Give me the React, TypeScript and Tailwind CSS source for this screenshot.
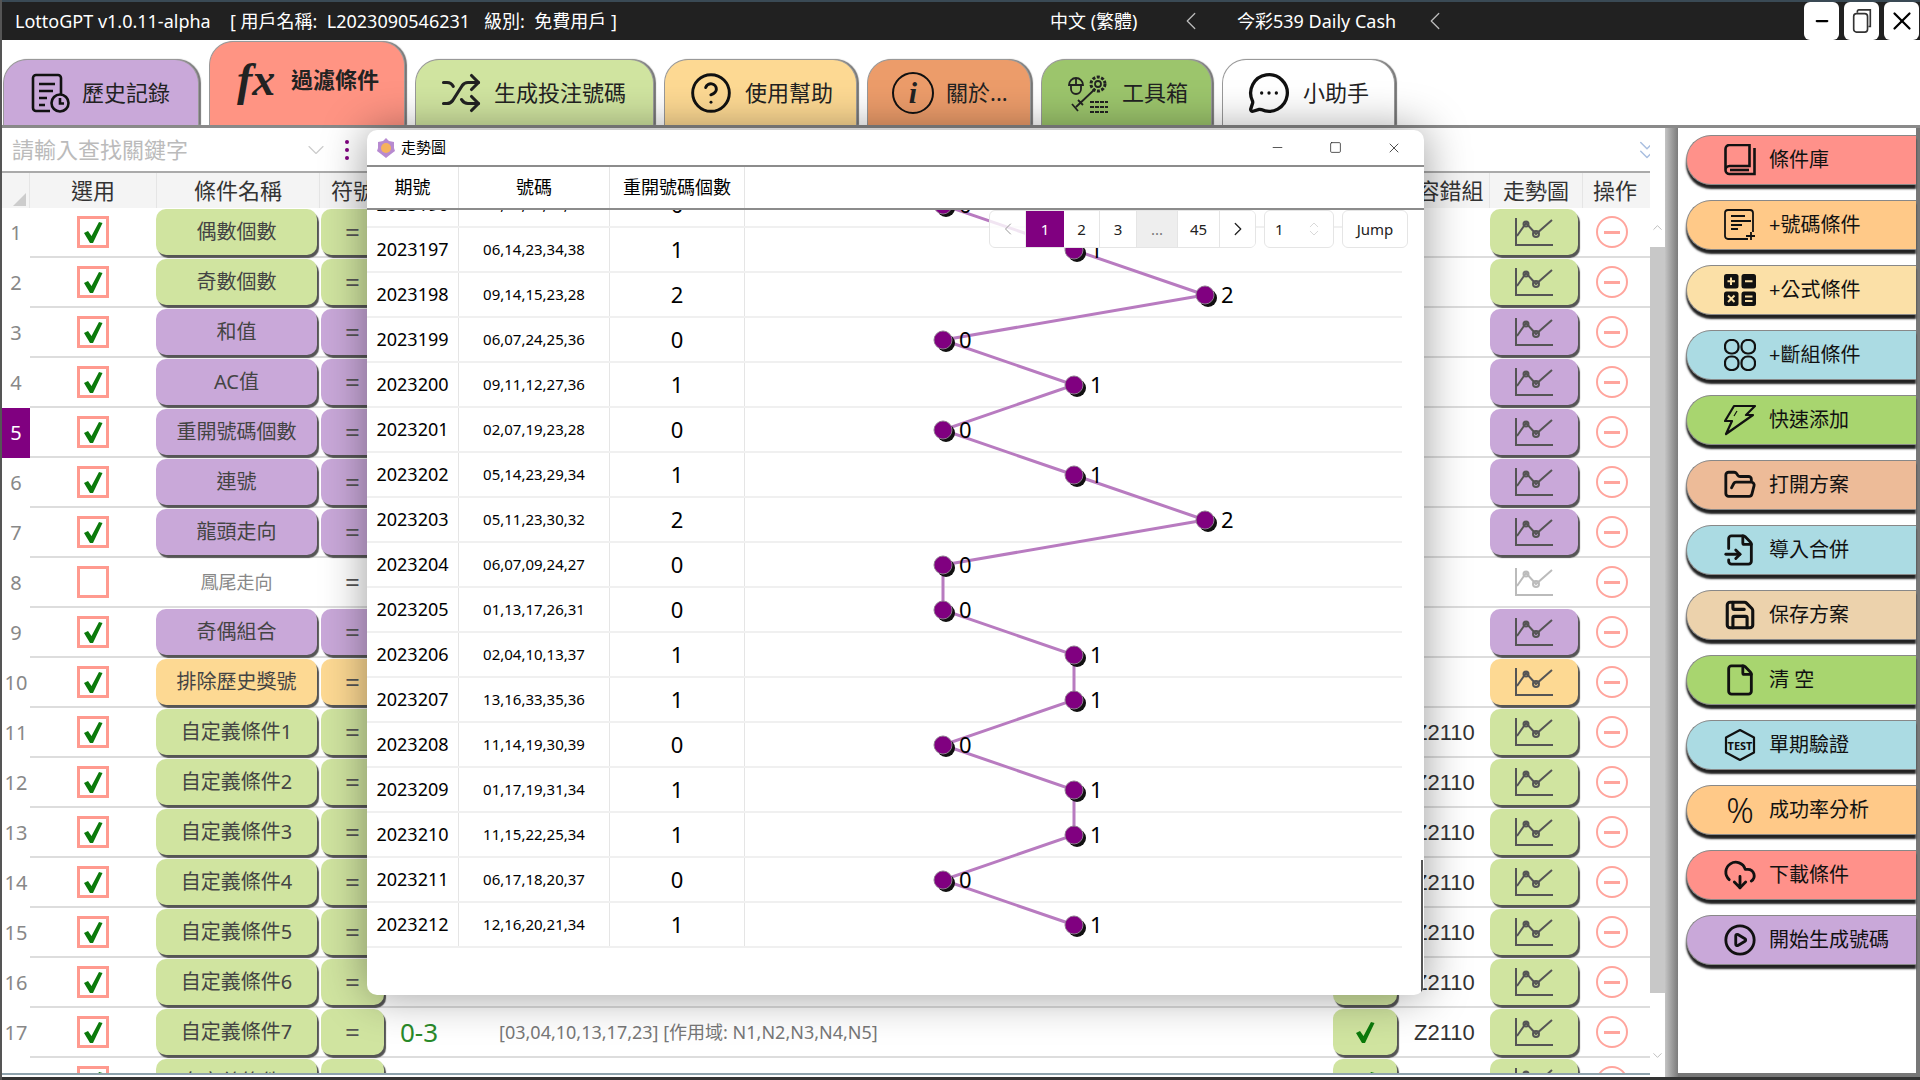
import {
  Check,
  ChevronDown,
  ChevronLeft,
  ChevronRight,
  ChevronsDown,
  ChevronsUpDown,
  ChevronUp,
  CirclePlay,
  CircleHelp,
  CloudDownload,
  File,
  FileInput,
  FolderOpen,
  MessageCircleMore,
  Minus,
  Save,
  Shuffle,
  Square,
  X,
} from "lucide-react";
import type { ReactNode } from "react";

const FONT = "font-['Noto_Sans','Noto_Sans_CJK_TC',sans-serif]";

const HistoryIcon = () => (
  <svg viewBox="0 0 40 40" className="h-10 w-10" fill="none" stroke="#111" strokeWidth="2.6">
    <path d="M20 38H6a3 3 0 0 1-3-3V5a3 3 0 0 1 3-3h22a3 3 0 0 1 3 3v16" />
    <path d="M9 11h16M9 18h14M9 25h8M9 32h6" />
    <circle cx="30" cy="30" r="8.5" />
    <path d="M30 25v5.5h4" />
  </svg>
);

const ToolsIcon = () => (
  <svg viewBox="0 0 44 44" className="h-11 w-11" fill="none" stroke="#222" strokeWidth="1.8">
    <path d="M3 14a7 7 0 0 1 14 0zM5 14v4a5 5 0 0 0 10 0v-4M10 7v6" />
    <circle cx="32" cy="13" r="7" strokeDasharray="3 1.5" strokeWidth="3" />
    <circle cx="32" cy="13" r="3" />
    <path d="M29 18 10 36M6 33l6 7M12 29l5 5" />
    <path d="M24 31h18M24 36h18M24 41h18" strokeWidth="2.2" strokeDasharray="4 1" />
  </svg>
);

const BookIcon = () => (
  <svg viewBox="0 0 32 32" className="h-8 w-8" fill="none" stroke="#111" strokeWidth="2.6">
    <path d="M1.5 26V5a4 4 0 0 1 4-4h20v21H5.500a4 4 0 0 0 0 8H30.500V4" />
    <path d="M6 26h19" />
  </svg>
);

const NoteAddIcon = () => (
  <svg viewBox="0 0 32 32" className="h-8 w-8" fill="none" stroke="#111" strokeWidth="1.8">
    <path d="M24 30H4a3 3 0 0 1-3-3V4a3 3 0 0 1 3-3h22a3 3 0 0 1 3 3v19" />
    <path d="M7 7h14M7 12h20M7 16h11M7 20h7M27 23v8M22 27h9" />
  </svg>
);

const CalcIcon = () => (
  <svg viewBox="0 0 32 32" className="h-8 w-8">
    <rect x="0" y="0" width="14.500" height="14.500" rx="2.500" fill="#111" />
    <rect x="17.500" y="0" width="14.500" height="14.500" rx="2.500" fill="#111" />
    <rect x="0" y="17.500" width="14.500" height="14.500" rx="2.500" fill="#111" />
    <rect x="17.500" y="17.500" width="14.500" height="14.500" rx="2.500" fill="#111" />
    <path
      d="M7 3.500v7.500M3.500 7.250h7.500M21 7.250h7.500M4 21.500l6.500 6.500M10.500 21.500 4 28M21 22.500h7.500M21 27h7.500"
      stroke="#fbe0a7"
      strokeWidth="2"
      fill="none"
    />
  </svg>
);

const GridIcon = () => (
  <svg viewBox="0 0 32 32" className="h-8 w-8" fill="none" stroke="#111" strokeWidth="2.2">
    <rect x="1" y="1" width="13.500" height="13.500" rx="6" />
    <rect x="17.500" y="1" width="13.500" height="13.500" rx="6" />
    <rect x="1" y="17.500" width="13.500" height="13.500" rx="6" />
    <rect x="17.500" y="17.500" width="13.500" height="13.500" rx="6" />
  </svg>
);

const BoltIcon = () => (
  <svg viewBox="0 0 32 32" className="h-8 w-8" fill="none" stroke="#111" strokeWidth="2.200" strokeLinejoin="round">
    <path d="M10 2h21l-9 9h7L2 30l6-13H1z" />
    <path d="M10 12l3-5" strokeWidth="1.200" />
  </svg>
);

const TestIcon = () => (
  <svg viewBox="0 0 32 32" className="h-8 w-8" fill="none" stroke="#111" strokeWidth="2.200">
    <path d="M16 1 30 8.500v15L16 31 2 23.500v-15z" strokeLinejoin="round" />
    <text x="16" y="20.500" textAnchor="middle" fontSize="11" fontWeight="700" stroke="none" fill="#111">
      TEST
    </text>
  </svg>
);

const TrendIcon = ({ color = "#555" }: { color?: string }) => (
  <svg viewBox="0 0 38 30" className="h-[30px] w-[38px]" fill="none" stroke={color} strokeWidth="2">
    <path d="M1 1v27h37" />
    <path d="M2 19 11 6l10 11L37 3" />
    <circle cx="11" cy="7" r="2.500" />
    <circle cx="21" cy="17" r="3" />
  </svg>
);

const GreenCheck = () => (
  <svg viewBox="0 0 22 24" className="h-6 w-[22px]">
    <path d="M2 13l4-2 3.500 5L17 2l3.500 1L11 23H8z" fill="#0b7a0b" />
  </svg>
);

const tabs = [
  { label: "歷史記錄", w: "w-[196px]", bg: "bg-[#c9a8d9]", pl: "pl-[26px]", icon: <HistoryIcon /> },
  {
    label: "過濾條件",
    w: "w-[196px]",
    bg: "bg-[#ff9483]",
    pl: "pl-[27px]",
    active: true,
    icon: <span className="w-[42px] font-['Liberation_Serif',serif] text-[46px] leading-none italic">fx</span>,
  },
  { label: "生成投注號碼", w: "w-[239px]", bg: "bg-[#d0e4a0]", pl: "pl-[24px]", icon: <Shuffle size={42} strokeWidth={1.8} color="#222" /> },
  { label: "使用幫助", w: "w-[193px]", bg: "bg-[#fdd993]", pl: "pl-[24px]", icon: <CircleHelp size={44} strokeWidth={1.6} color="#111" /> },
  {
    label: "關於...",
    w: "w-[164px]",
    bg: "bg-[#ec9c6a]",
    pl: "pl-[24px]",
    icon: (
      <span className="flex h-[42px] w-[42px] items-center justify-center rounded-full border-[2.500px] border-[#111] font-['Liberation_Serif',serif] text-[30px] font-bold italic">
        i
      </span>
    ),
  },
  { label: "工具箱", w: "w-[171px]", bg: "bg-[#9cc56c]", pl: "pl-[24px]", icon: <ToolsIcon /> },
  { label: "小助手", w: "w-[173px]", bg: "bg-white", pl: "pl-[24px]", icon: <MessageCircleMore size={44} strokeWidth={1.8} color="#111" /> },
];

const sideButtons: { label: string; bg: string; icon: ReactNode }[] = [
  { label: "條件庫", bg: "bg-[#ff918a]", icon: <BookIcon /> },
  { label: "+號碼條件", bg: "bg-[#ffc988]", icon: <NoteAddIcon /> },
  { label: "+公式條件", bg: "bg-[#fbe0a7]", icon: <CalcIcon /> },
  { label: "+斷組條件", bg: "bg-[#abdbe3]", icon: <GridIcon /> },
  { label: "快速添加", bg: "bg-[#a8d56f]", icon: <BoltIcon /> },
  { label: "打開方案", bg: "bg-[#edbb98]", icon: <FolderOpen size={36} strokeWidth={2} color="#111" /> },
  { label: "導入合併", bg: "bg-[#abdbe3]", icon: <FileInput size={36} strokeWidth={2} color="#111" /> },
  { label: "保存方案", bg: "bg-[#ecd2ac]", icon: <Save size={36} strokeWidth={2.200} color="#111" /> },
  { label: "清 空", bg: "bg-[#a8d56f]", icon: <File size={36} strokeWidth={2} color="#111" /> },
  { label: "單期驗證", bg: "bg-[#abdbe3]", icon: <TestIcon /> },
  { label: "成功率分析", bg: "bg-[#ffc988]", icon: <span className="w-8 text-center text-[34px] leading-none font-light">%</span> },
  { label: "下載條件", bg: "bg-[#ff918a]", icon: <CloudDownload size={36} strokeWidth={2} color="#111" /> },
  { label: "開始生成號碼", bg: "bg-[#c9a8d9]", icon: <CirclePlay size={36} strokeWidth={2} color="#111" /> },
];

const GREEN = "bg-[#d0e4a0]";
const PURPLE = "bg-[#c9a8d9]";
const ORANGE = "bg-[#fdd993]";

const conditions = [
  { name: "偶數個數", color: GREEN },
  { name: "奇數個數", color: GREEN },
  { name: "和值", color: PURPLE },
  { name: "AC值", color: PURPLE },
  { name: "重開號碼個數", color: PURPLE },
  { name: "連號", color: PURPLE },
  { name: "龍頭走向", color: PURPLE },
  { name: "鳳尾走向", color: "", off: true },
  { name: "奇偶組合", color: PURPLE },
  { name: "排除歷史獎號", color: ORANGE },
  { name: "自定義條件1", color: GREEN, custom: true },
  { name: "自定義條件2", color: GREEN, custom: true },
  { name: "自定義條件3", color: GREEN, custom: true },
  { name: "自定義條件4", color: GREEN, custom: true },
  { name: "自定義條件5", color: GREEN, custom: true },
  { name: "自定義條件6", color: GREEN, custom: true },
  { name: "自定義條件7", color: GREEN, custom: true },
  { name: "自定義條件8", color: GREEN, custom: true },
];

const draws: [string, string, number][] = [
  ["2023196", "04,10,13,27,34", 0],
  ["2023197", "06,14,23,34,38", 1],
  ["2023198", "09,14,15,23,28", 2],
  ["2023199", "06,07,24,25,36", 0],
  ["2023200", "09,11,12,27,36", 1],
  ["2023201", "02,07,19,23,28", 0],
  ["2023202", "05,14,23,29,34", 1],
  ["2023203", "05,11,23,30,32", 2],
  ["2023204", "06,07,09,24,27", 0],
  ["2023205", "01,13,17,26,31", 0],
  ["2023206", "02,04,10,13,37", 1],
  ["2023207", "13,16,33,35,36", 1],
  ["2023208", "11,14,19,30,39", 0],
  ["2023209", "01,17,19,31,34", 1],
  ["2023210", "11,15,22,25,34", 1],
  ["2023211", "06,17,18,20,37", 0],
  ["2023212", "12,16,20,21,34", 1],
];

const pointX = (v: number) => 198 + v * 131;
const pointY = (i: number) => 22 + i * 45;

const ConditionRow = ({ index, row }: { index: number; row: (typeof conditions)[number] }) => {
  const btn = "rounded-[10px] shadow-[2px_3px_1px_#555]";
  return (
    <div className="flex h-[50px] shrink-0">
      <div
        className={`flex w-[28px] items-center justify-center text-[20px] ${
          index === 5 ? "bg-[#800080] text-white" : "text-[#888]"
        }`}
      >
        {index}
      </div>
      <div className="flex flex-1 items-center border-b-2 border-[#ddd]">
        <div className="flex w-[126px] items-center justify-center">
          <div className="flex h-8 w-8 items-center justify-center border-[3px] border-[#ff9a8f] bg-white">
            {!row.off && <GreenCheck />}
          </div>
        </div>
        <div
          className={`flex h-[46px] w-[161px] items-center justify-center ${
            row.off ? "text-[18px] text-[#888]" : `${btn} ${row.color} text-[20px] text-[#444]`
          }`}
        >
          {row.name}
        </div>
        <div
          className={`ml-[4px] flex h-[46px] w-[63px] items-center justify-center text-[26px] text-[#555] ${
            row.off ? "" : `${btn} ${row.color}`
          }`}
        >
          =
        </div>
        <div className="ml-[16px] w-[99px] text-[26px] text-[#2a8a2a]">{row.custom ? "0-3" : ""}</div>
        <div className="w-[834px] text-[18px] whitespace-nowrap text-[#777]">
          {row.custom ? "[03,04,10,13,17,23] [作用域:  N1,N2,N3,N4,N5]" : ""}
        </div>
        <div className={`flex h-[46px] w-[64px] items-center justify-center ${row.custom ? `${btn} ${row.color}` : ""}`}>
          {row.custom && <GreenCheck />}
        </div>
        <div className="ml-[17px] w-[76px] font-['Liberation_Sans',sans-serif] text-[22px] text-[#333]">
          {row.custom ? "Z2110" : ""}
        </div>
        <div
          className={`flex h-[46px] w-[88px] items-center justify-center ${row.off ? "" : `${btn} ${row.color}`}`}
        >
          <TrendIcon color={row.off ? "#bbb" : "#555"} />
        </div>
        <div className="ml-[18px] flex h-8 w-8 items-center justify-center rounded-full border-2 border-[#ffa59d]">
          <div className="h-[3px] w-[16px] bg-[#ffa59d]" />
        </div>
      </div>
    </div>
  );
};

const TrendWindow = () => (
  <div className="absolute top-[130px] left-[365px] flex h-[865px] w-[1057px] flex-col overflow-hidden rounded-[10px] bg-white shadow-[0_0_45px_rgba(0,0,0,0.4)]">
    <div className="flex h-[37px] shrink-0 items-center border-b-2 border-[#8c8c8c]">
      <svg viewBox="0 0 18 20" className="ml-[10px] h-5 w-[18px]">
        <path d="M9 0l3 3 5 1v6l1 3-4 3-5 4-5-4-4-3 1-3V4l5-1z" fill="#b78ad0" />
        <circle cx="9" cy="10" r="5" fill="#f5b25c" />
      </svg>
      <span className="ml-[6px] text-[15px] text-black">走勢圖</span>
      <div className="ml-auto flex items-center">
        <Minus size={15} strokeWidth={1.200} color="#222" className="mr-[44px]" />
        <Square size={13} strokeWidth={1.400} color="#222" className="mr-[44px]" />
        <X size={16} strokeWidth={1.200} color="#222" className="mr-[22px]" />
      </div>
    </div>
    <div className="flex h-[43px] shrink-0 border-b-2 border-[#8c8c8c] text-[18px] text-black">
      <div className="flex w-[92px] items-center justify-center border-r border-[#e5e5e5]">期號</div>
      <div className="flex w-[151px] items-center justify-center border-r border-[#e5e5e5]">號碼</div>
      <div className="flex w-[135px] items-center justify-center border-r border-[#e5e5e5]">重開號碼個數</div>
    </div>
    <div className="relative flex-1 overflow-hidden">
      <div className="relative -mt-[27px]">
        {draws.map(([period, nums, repeat]) => (
          <div key={period} className="flex h-[45px] w-[1035px] border-b-2 border-[#f0f0f0] text-black">
            <div className="flex w-[92px] items-center justify-center border-r border-[#e5e5e5] text-[18px]">{period}</div>
            <div className="flex w-[151px] items-center justify-center border-r border-[#e5e5e5] text-[15px]">{nums}</div>
            <div className="flex w-[135px] items-center justify-center border-r border-[#e5e5e5] text-[22px]">{repeat}</div>
          </div>
        ))}
        <svg className="absolute top-0 left-[378px] h-[765px] w-[679px]" viewBox="0 0 679 765">
          <polyline
            points={draws.map(([, , v], i) => `${pointX(v)},${pointY(i)}`).join(" ")}
            fill="none"
            stroke="#b87bc0"
            strokeWidth="3"
          />
          {draws.map(([period, , v], i) => (
            <g key={period}>
              <circle cx={pointX(v) + 3} cy={pointY(i) + 3} r="9" fill="#111" />
              <circle cx={pointX(v)} cy={pointY(i)} r="9" fill="#800080" stroke="#8f7a90" />
              <text x={pointX(v) + 16} y={pointY(i) + 8} fontSize="22" fill="#000">
                {v}
              </text>
            </g>
          ))}
        </svg>
      </div>
      <div className="absolute top-0 left-[622px] flex h-[38px] items-stretch text-[15px] text-[#222]">
        <div className="flex w-[267px] overflow-hidden rounded-md border border-[#e5e5e5] bg-white/80">
          <div className="flex w-[36px] items-center justify-center border-r border-[#eee]">
            <ChevronLeft size={20} strokeWidth={1.200} color="#999" />
          </div>
          <div className="flex w-[38px] items-center justify-center bg-[#800080] text-white">1</div>
          <div className="flex w-[36px] items-center justify-center border-r border-[#e5e5e5] bg-white">2</div>
          <div className="flex w-[37px] items-center justify-center border-r border-[#e5e5e5] bg-white">3</div>
          <div className="flex w-[40px] items-center justify-center bg-[#eeeeee] text-[#777]">...</div>
          <div className="flex w-[43px] items-center justify-center border-x border-[#e5e5e5] bg-white">45</div>
          <div className="flex flex-1 items-center justify-center bg-white">
            <ChevronRight size={22} strokeWidth={1.400} color="#222" />
          </div>
        </div>
        <div className="ml-[8px] flex w-[70px] items-center justify-between rounded-md border border-[#e5e5e5] bg-white pr-[10px] pl-[10px]">
          1
          <ChevronsUpDown size={18} strokeWidth={1} color="#ccc" />
        </div>
        <div className="ml-[8px] flex w-[66px] items-center justify-center rounded-md border border-[#e5e5e5] bg-white">
          Jump
        </div>
      </div>
    </div>
    <div className="absolute right-[1px] bottom-0 h-[135px] w-[2px] bg-[#555]" />
  </div>
);

export default function App() {
  return (
    <div className={`relative flex h-[1080px] w-[1920px] flex-col overflow-hidden border-l-2 border-[#555] bg-white ${FONT}`}>
      <header className="relative flex h-[40px] shrink-0 items-center border-t-2 border-[#3a4a55] bg-[#212121] text-[18px] whitespace-pre text-white">
        <span className="ml-[13px] w-[215px]">LottoGPT v1.0.11-alpha</span>
        <span className="w-[820px]">[ 用戶名稱:  L2023090546231   級別:  免費用戶 ]</span>
        <span className="w-[128px]">中文 (繁體)</span>
        <ChevronLeft size={30} strokeWidth={1} color="#bbb" className="-ml-[2px]" />
        <span className="ml-[31px] w-[183px]">今彩539 Daily Cash</span>
        <ChevronLeft size={30} strokeWidth={1} color="#bbb" />
        <div className="absolute top-0 right-[1px] flex h-[38px] gap-[5px] text-black">
          <div className="flex w-[35px] items-center justify-center rounded-md bg-white">
            <Minus size={18} strokeWidth={3} />
          </div>
          <div className="flex w-[35px] items-center justify-center rounded-md bg-white">
            <svg viewBox="0 0 20 26" className="h-6 w-5" fill="none" stroke="#333" strokeWidth="1.800">
              <rect x="1" y="5" width="15" height="20" rx="3" />
              <path d="M5 4V2.500A1.500 1.500 0 0 1 6.500 1H19v18h-2" />
            </svg>
          </div>
          <div className="flex w-[35px] items-center justify-center rounded-md bg-white">
            <X size={30} strokeWidth={1.800} />
          </div>
        </div>
      </header>

      <nav className="flex h-[88px] shrink-0 items-end gap-[10px] border-b-[3px] border-[#8a8a8a] pl-[1px]">
        {tabs.map((tab) => (
          <div
            key={tab.label}
            className={`flex ${tab.w} ${tab.bg} ${tab.pl} items-center gap-[12px] rounded-t-[24px] border-[1.500px] border-b-0 border-[#999] text-[22px] text-[#222] shadow-[2px_0_1px_#777] ${
              tab.active ? "h-[84px] pb-[8px] font-bold" : "h-[66px]"
            }`}
          >
            {tab.icon}
            <span>{tab.label}</span>
          </div>
        ))}
      </nav>

      <main className="flex min-h-0 flex-1">
        <section className="flex h-[947px] w-[1648px] shrink-0 flex-col overflow-hidden border-b-2 border-[#8fa3ad]">
          <div className="flex h-[45px] shrink-0 items-center border-b-2 border-[#aaa] pl-[10px] text-[22px] text-[#bbb]">
            <span className="w-[290px]">請輸入查找關鍵字</span>
            <ChevronDown size={28} strokeWidth={1} color="#ccc" />
            <div className="ml-[15px] flex flex-col gap-[4px]">
              <div className="h-[4px] w-[4px] rounded-full bg-[#800080]" />
              <div className="h-[4px] w-[4px] rounded-full bg-[#800080]" />
              <div className="h-[4px] w-[4px] rounded-full bg-[#800080]" />
            </div>
            <ChevronsDown size={30} strokeWidth={1.200} color="#a9bfe0" className="ml-auto mr-[-12px]" />
          </div>
          <div className="flex h-[35px] shrink-0 bg-[#f4f4f4] text-[22px] text-[#333]">
            <div className="relative w-[28px] border-r border-[#e5e5e5]">
              <div className="absolute right-[3px] bottom-[2px] h-0 w-0 border-b-[13px] border-l-[13px] border-b-[#ccc] border-l-transparent" />
            </div>
            <div className="flex w-[127px] items-center justify-center border-r border-[#e5e5e5]">選用</div>
            <div className="flex w-[163px] items-center justify-center border-r border-[#e5e5e5]">條件名稱</div>
            <div className="w-[1092px] pl-[11px] leading-[35px]">符號</div>
            <div className="flex w-[78px] items-center justify-center border-r border-[#e5e5e5]">容錯組</div>
            <div className="flex w-[93px] items-center justify-center border-r border-[#e5e5e5]">走勢圖</div>
            <div className="flex w-[64px] items-center justify-center">操作</div>
          </div>
          {conditions.map((row, i) => (
            <ConditionRow key={row.name} index={i + 1} row={row} />
          ))}
        </section>

        <div className="flex h-[947px] w-[15px] shrink-0 flex-col items-center pt-[80px]">
          <div className="flex h-[39px] w-full items-center justify-center">
            <ChevronUp size={15} strokeWidth={1.200} color="#aaa" />
          </div>
          <div className="h-[746px] w-full bg-[#c8c8c8]" />
          <div className="mt-auto mb-[10px] flex h-[20px] items-center">
            <ChevronDown size={15} strokeWidth={1.200} color="#aaa" />
          </div>
        </div>
        <div className="w-[13px] shrink-0 bg-gradient-to-r from-[#c4c4c4] to-[#7c7c7c]" />

        <aside className="flex flex-1 flex-col gap-[15px] border-r-[4px] border-b-[4px] border-[#777] pt-[7px] pl-[8px]">
          {sideButtons.map((b) => (
            <div
              key={b.label}
              className={`flex h-[50px] shrink-0 items-center rounded-l-[25px] border-[1.500px] border-r-0 border-[#888] pl-[36px] text-[20px] text-[#111] shadow-[0_4px_2px_#222] ${b.bg}`}
            >
              <div className="flex w-[34px] items-center justify-center">{b.icon}</div>
              <span className="ml-[12px] whitespace-pre">{b.label}</span>
            </div>
          ))}
        </aside>
      </main>
      <div className="h-[3px] shrink-0 bg-[#333]" />

      <TrendWindow />
    </div>
  );
}
